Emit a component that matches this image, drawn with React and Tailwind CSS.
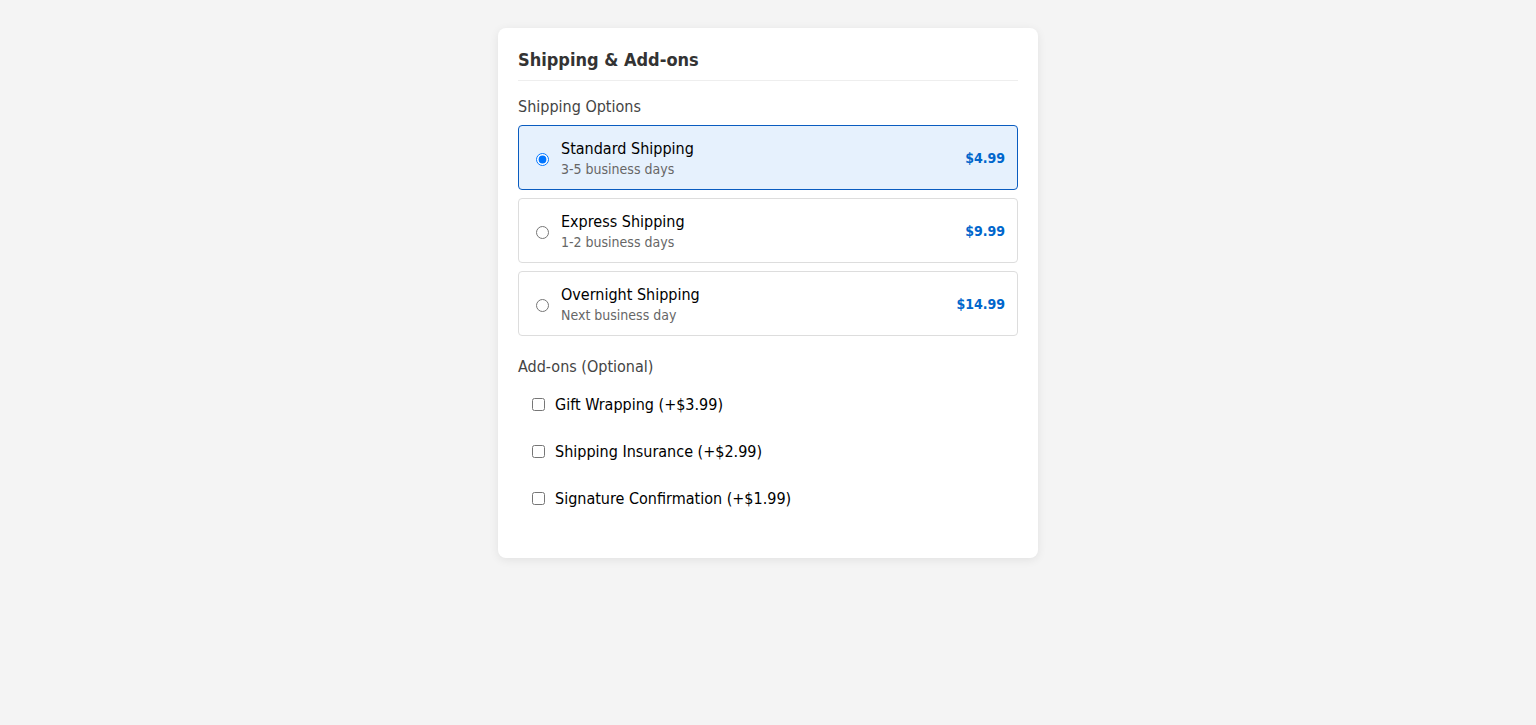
import { useState } from "react";

const options = [
  { id: "standard", name: "Standard Shipping", desc: "3-5 business days", price: "$4.99" },
  { id: "express", name: "Express Shipping", desc: "1-2 business days", price: "$9.99" },
  { id: "overnight", name: "Overnight Shipping", desc: "Next business day", price: "$14.99" },
];

const addons = [
  { id: "gift", label: "Gift Wrapping (+$3.99)" },
  { id: "insurance", label: "Shipping Insurance (+$2.99)" },
  { id: "signature", label: "Signature Confirmation (+$1.99)" },
];

export default function App() {
  const [selected, setSelected] = useState("standard");
  const [checked, setChecked] = useState({});

  return (
    <div className="min-h-screen bg-[#f4f4f4] pt-[28px] font-['DejaVu_Sans_Condensed','DejaVu_Sans',sans-serif]">
      <div className="mx-auto w-[540px] rounded-lg bg-white p-5 shadow-[0_2px_10px_rgba(0,0,0,0.08)]">
        <h2 className="border-b border-[#eee] pt-[1px] pb-[9px] text-[18px] leading-[22px] font-bold text-[#333]">
          Shipping &amp; Add-ons
        </h2>

        {/* Shipping options */}
        <div className="mt-[16px] mb-[9px] text-[16px] leading-[19px] text-[#444]">Shipping Options</div>
        <div className="flex flex-col gap-[8px]">
          {options.map((o) => {
            const active = selected === o.id;
            return (
              <label
                key={o.id}
                className={`flex cursor-pointer items-center rounded border px-3 pt-[13px] pb-[11px] ${
                  active ? "border-[#0a5cc0] bg-[#e6f1fd]" : "border-[#ddd] bg-white"
                }`}
              >
                <input
                  type="radio"
                  name="shipping"
                  checked={active}
                  onChange={() => setSelected(o.id)}
                  className="mt-[1px] mr-[3px] mb-0 ml-[5px] h-[13px] w-[13px]"
                />
                <div className="ml-[9px] flex-1">
                  <div className="text-[16px] leading-[19px] text-black">{o.name}</div>
                  <div className="mt-[3px] text-[14px] leading-[17px] text-[#666]">{o.desc}</div>
                </div>
                <div className="text-[14px] font-bold text-[#0066cc]">{o.price}</div>
              </label>
            );
          })}
        </div>

        {/* Add-ons */}
        <div className="mt-[21px] mb-[9px] text-[16px] leading-[19px] text-[#444]">Add-ons (Optional)</div>
        <div className="mb-5 flex flex-col gap-[8px]">
          {addons.map((a) => (
            <label key={a.id} className="flex cursor-pointer items-center py-[10px] pl-[10px]">
              <input
                type="checkbox"
                checked={!!checked[a.id]}
                onChange={() => setChecked({ ...checked, [a.id]: !checked[a.id] })}
                className="my-[3px] mr-[3px] ml-[4px] h-[13px] w-[13px]"
              />
              <span className="ml-[7px] text-[16px] leading-[19px] text-black">{a.label}</span>
            </label>
          ))}
        </div>
      </div>
    </div>
  );
}
